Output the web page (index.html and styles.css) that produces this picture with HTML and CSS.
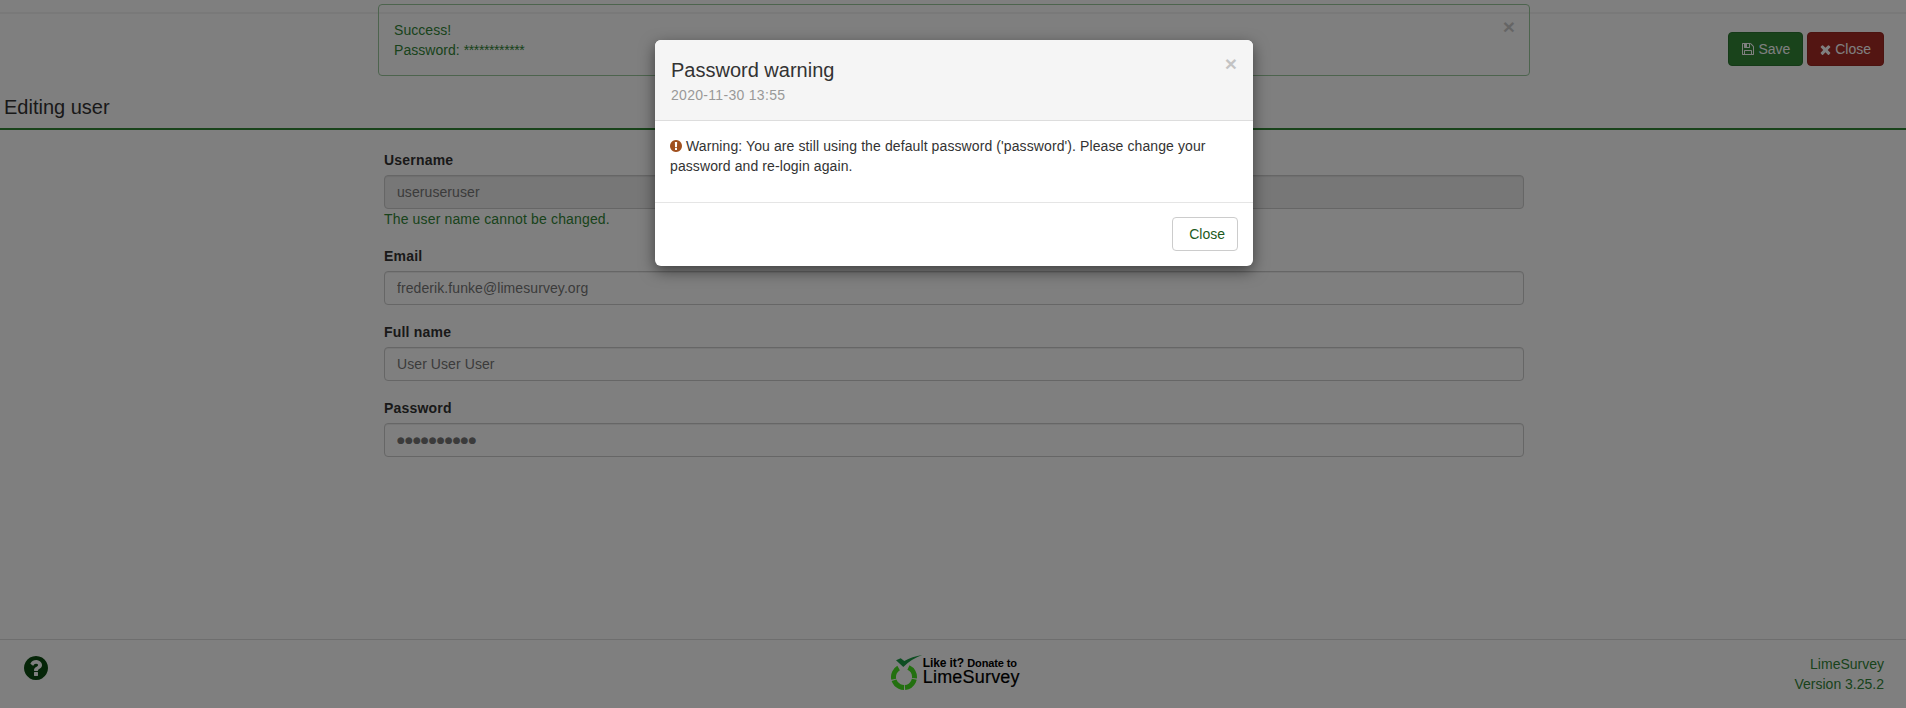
FILE: index.html
```html
<!DOCTYPE html>
<html lang="en">
<head>
  <meta charset="utf-8">
  <title>Editing user</title>
  <link rel="stylesheet" href="styles.css">
</head>
<body>
  <div class="topbar"></div>

  <div class="toolbar">
    <button class="btn btn-save">
      <svg class="icon" viewBox="0 0 1792 1792"><path d="M512 1536h768v-384h-768v384zm896 0h128v-896q0-14-10-38.5t-20-34.5l-281-281q-10-10-34-20t-39-10v416q0 40-28 68t-68 28h-576q-40 0-68-28t-28-68v-416h-128v1280h128v-416q0-40 28-68t68-28h832q40 0 68 28t28 68v416zm-384-928v-320q0-13-9.5-22.5t-22.5-9.5h-192q-13 0-22.5 9.5t-9.5 22.5v320q0 13 9.5 22.5t22.5 9.5h192q13 0 22.500-9.5t9.5-22.5zm640 32v928q0 40-28 68t-68 28h-1344q-40 0-68-28t-28-68v-1344q0-40 28-68t68-28h928q40 0 88 20t76 48l280 280q28 28 48 76t20 88z"/></svg>
      Save
    </button>
    <button class="btn btn-close">
      <svg class="icon icon-times" viewBox="224 224 1344 1344"><path d="M1490 1322q0 40-28 68l-136 136q-28 28-68 28t-68-28l-294-294-294 294q-28 28-68 28t-68-28l-136-136q-28-28-28-68t28-68l294-294-294-294q-28-28-28-68t28-68l136-136q28-28 68-28t68 28l294 294 294-294q28-28 68-28t68 28l136 136q28 28 28 68t-28 68l-294 294 294 294q28 28 28 68z"/></svg>
      Close
    </button>
  </div>

  <div class="alert">
    <span class="alert-x">×</span>
    Success!<br>
    Password: <span class="stars">************</span>
  </div>

  <h1 class="page-title">Editing user</h1>

  <form class="user-form">
    <div class="field">
      <label>Username</label>
      <input class="input" type="text" value="useruseruser" disabled>
      <p class="help">The user name cannot be changed.</p>
    </div>
    <div class="field">
      <label>Email</label>
      <input class="input" type="text" value="frederik.funke@limesurvey.org">
    </div>
    <div class="field">
      <label>Full name</label>
      <input class="input" type="text" value="User User User">
    </div>
    <div class="field">
      <label>Password</label>
      <input class="input input-pass" type="text" value="●●●●●●●●●●">
    </div>
  </form>

  <footer class="footer">
    <svg class="help-icon" viewBox="128 128 1536 1536"><path d="M1024 1376v-192q0-14-9-23t-23-9h-192q-14 0-23 9t-9 23v192q0 14 9 23t23 9h192q14 0 23-9t9-23zm256-672q0-88-55.5-163t-138.5-116-170-41q-243 0-371 213-15 24 8 42l132 100q7 6 19 6 16 0 25-12 53-68 86-92 34-24 86-24 48 0 85.5 26t37.5 59q0 38-20 61t-68 45q-63 28-115.5 86.5t-52.5 125.5v36q0 14 9 23t23 9h192q14 0 23-9t9-23q0-19 21.5-49.5t54.5-49.5q32-18 49-28.5t46-35 44.5-48 28-60.5 12.5-81zm384 192q0 209-103 385.5t-279.5 279.5-385.5 103-385.5-103-279.5-279.5-103-385.5 103-385.5 279.5-279.5 385.5-103 385.5 103 279.5 279.5 103 385.5z"/></svg>

    <div class="donate">
      <svg class="donate-logo" viewBox="0 0 32 37">
        <circle class="ring" cx="13" cy="23" r="10.500" pathLength="100" stroke-dasharray="20 1.500 20 1.500 20 1.500 20 15.500" transform="rotate(-65 13 23)"/>
        <path class="check" d="M5 6.300L9.700 4.300 13.300 7Q21 2.500 31.300 1 20 5 12.300 13z"/>
      </svg>
      <div class="donate-text">
        <div class="donate-line">Like it? <small>Donate to</small></div>
        <div class="donate-name">LimeSurvey</div>
      </div>
    </div>

    <div class="version">LimeSurvey<br>Version 3.25.2</div>
  </footer>

  <div class="backdrop"></div>

  <div class="modal">
    <div class="modal-header">
      <span class="modal-x">×</span>
      <h4>Password warning</h4>
      <div class="modal-date">2020-11-30 13:55</div>
    </div>
    <div class="modal-body">
      <svg class="warn-icon" viewBox="128 128 1536 1536"><path d="M896 128q209 0 385.500 103t279.500 279.500 103 385.500-103 385.500-279.500 279.500-385.500 103-385.500-103-279.500-279.500-103-385.500 103-385.500 279.500-279.500 385.500-103zm128 1247v-190q0-14-9-23.500t-22-9.500h-192q-13 0-23 10t-10 23v190q0 13 10 23t23 10h192q13 0 22-9.500t9-23.500zm-2-344l18-621q0-12-10-18-10-8-24-8h-220q-14 0-24 8-10 6-10 18l17 621q0 10 10 17.500t24 7.500h185q14 0 23.500-7.500t10.500-17.500z"/></svg>
      Warning: You are still using the default password ('password'). Please change your password and re-login again.
    </div>
    <div class="modal-footer">
      <button class="btn btn-default">Close</button>
    </div>
  </div>
</body>
</html>
```

FILE: styles.css
```css
* { box-sizing: border-box; }

html, body { height: 100%; margin: 0; }

body {
  display: flex;
  flex-direction: column;
  min-height: 708px;
  background-color: #fff;
  color: #333;
  font-family: "Liberation Sans", Arial, sans-serif;
  font-size: 14px;
  line-height: 20px;
  overflow: hidden;
}

.topbar { height: 14px; border-bottom: 2px solid #f2f2f2; flex: none; }

.toolbar {
  display: flex;
  justify-content: flex-end;
  gap: 4px;
  height: 66px;
  padding: 18px 22px 0 0;
  flex: none;
}

.btn {
  height: 34px;
  padding: 6px 12px;
  border: 1px solid transparent;
  border-radius: 4px;
  font: inherit;
  color: #fff;
  white-space: nowrap;
}
.btn-save { background: #328637; border-color: #2b7530; }
.btn-close { background: #a62a24; border-color: #982620; }
.btn-default { padding: 6px 12px 6px 16px; background: #fff; border-color: #ccc; color: #1c5a20; }

.icon { width: 14px; height: 14px; fill: currentColor; vertical-align: -2px; }
.icon-times { width: 11px; height: 11px; vertical-align: -1px; }

.alert {
  position: absolute;
  left: 378px;
  top: 4px;
  width: 1152px;
  height: 72px;
  padding: 15px;
  border: 1px solid #9ac99d;
  border-radius: 4px;
  color: #328637;
  letter-spacing: .05px;
}
.stars { letter-spacing: -.4px; }

.alert-x {
  position: absolute;
  right: 14px;
  top: 12px;
  font-size: 21px;
  font-weight: bold;
  color: #000;
  opacity: .2;
}

.page-title {
  height: 50px;
  margin: 0;
  padding: 0 0 0 4px;
  border-bottom: 2px solid #328637;
  font-size: 20px;
  font-weight: normal;
  line-height: 54px;
  flex: none;
}

.user-form {
  display: flex;
  flex-direction: column;
  width: 1140px;
  margin: 20px 0 0 384px;
}

.field { margin-bottom: 17px; }

.field label {
  display: block;
  margin-bottom: 5px;
  font-weight: bold;
  letter-spacing: .2px;
}

.input {
  display: block;
  width: 100%;
  height: 34px;
  padding: 6px 12px;
  border: 1px solid #ccc;
  border-radius: 4px;
  background: #fff;
  color: #777;
  font: inherit;
  letter-spacing: .08px;
  box-shadow: inset 0 1px 1px rgba(0,0,0,.075);
}
.input:disabled { background: #eee; color: #777; }
.input-pass { font-family: "DejaVu Sans", sans-serif; font-size: 9px; letter-spacing: .1px; }

.help { margin: 0; color: #328637; line-height: 20px; letter-spacing: .15px; }

.footer {
  display: flex;
  justify-content: space-between;
  align-items: center;
  height: 69px;
  margin-top: auto;
  padding: 0 22px 0 24px;
  border-top: 1px solid #ddd;
  flex: none;
}

.help-icon { width: 24px; height: 24px; fill: #0b4a10; margin-top: -12px; }

.donate { display: flex; margin: -4px 0 0 68px; }
.donate-logo { width: 32px; height: 37px; flex: none; }
.ring { fill: none; stroke: #46e020; stroke-width: 5; }
.check { fill: #1c9c46; }
.donate-text { margin-top: 2px; color: #000; }
.donate-line { font-size: 12px; font-weight: bold; line-height: 14px; letter-spacing: -.1px; }
.donate-line small { font-size: 11px; }
.donate-name { font-size: 18px; line-height: 15px; letter-spacing: .2px; -webkit-text-stroke: .2px #000; }

.version { color: #328637; text-align: right; }

.backdrop {
  position: absolute;
  left: 0;
  top: 0;
  width: 100%;
  height: 100%;
  background: #000;
  opacity: .5;
}

.modal {
  position: absolute;
  left: 655px;
  top: 40px;
  width: 598px;
  background: #fff;
  border-radius: 6px;
  box-shadow: 0 5px 15px rgba(0,0,0,.5);
}

.modal-header {
  position: relative;
  height: 81px;
  padding: 15px 16px;
  background: #f5f5f5;
  border-bottom: 1px solid #ddd;
  border-radius: 6px 6px 0 0;
}
.modal-header h4 { margin: 0; font-size: 20px; font-weight: normal; line-height: 30px; }
.modal-date { color: #999; line-height: 20px; letter-spacing: .3px; }

.modal-x {
  position: absolute;
  right: 16px;
  top: 14px;
  font-size: 21px;
  font-weight: bold;
  color: #000;
  opacity: .2;
}

.modal-body { height: 81px; padding: 15px; letter-spacing: .1px; }
.warn-icon { width: 12px; height: 12px; fill: #a0501f; vertical-align: -1px; }

.modal-footer {
  display: flex;
  justify-content: flex-end;
  height: 64px;
  padding: 14px 15px;
  border-top: 1px solid #e5e5e5;
}
```
